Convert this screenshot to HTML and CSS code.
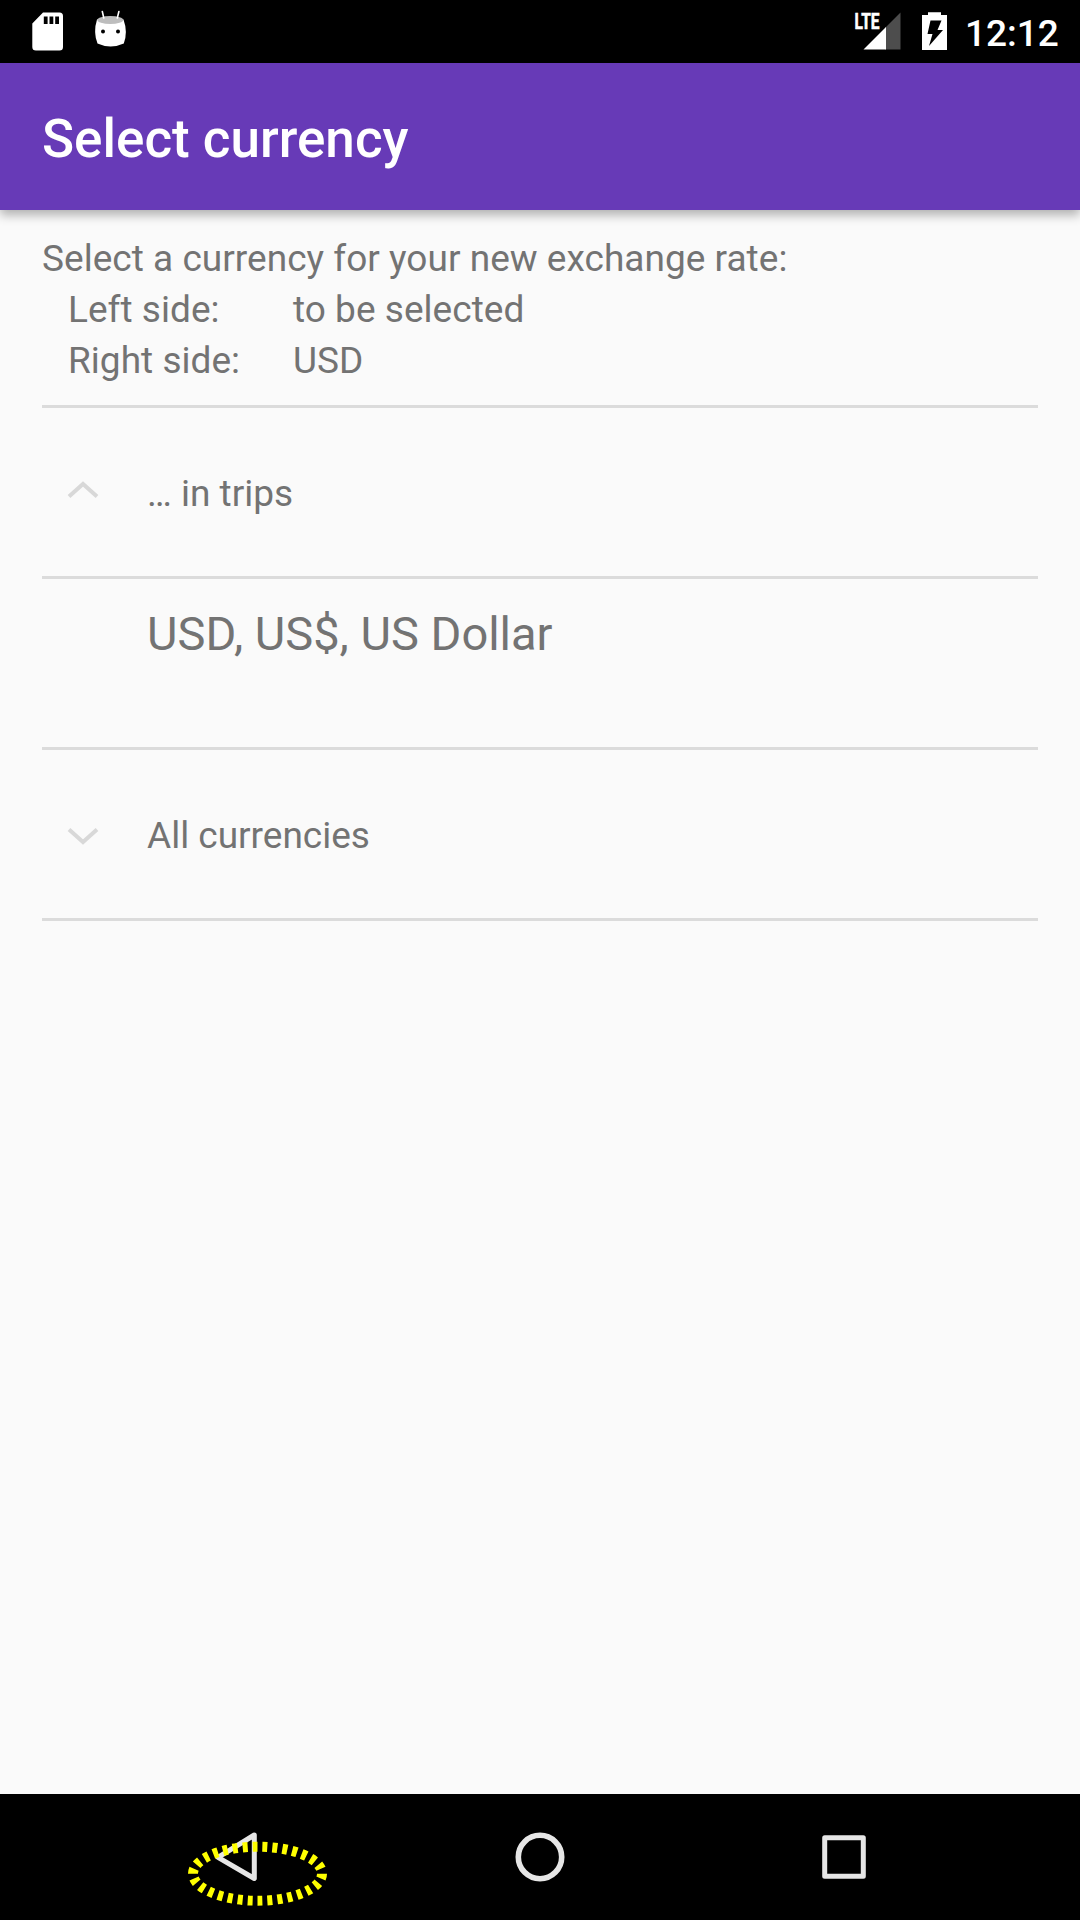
FILE: index.html
```html
<!DOCTYPE html>
<html lang="en">
<head>
<meta charset="utf-8">
<title>Select currency</title>
<link rel="stylesheet" href="styles.css">
</head>
<body>
<div class="screen">
  <header class="status-bar">
    <svg class="status-icons" width="130" height="63" viewBox="0 0 130 63" aria-hidden="true">
      <path fill="#fff" fill-rule="evenodd" d="M43 12.5H59.500Q63 12.500 63 16V47Q63 50.500 59.500 50.500H36Q32.300 50.500 32.300 47V23.500ZM43.800 16.500V24H47.600V16.500ZM49.500 16.500V24H53.300V16.500ZM55.200 16.500V24H59V16.500Z"/>
      <path fill="#fff" d="M97 19.500Q110 15.500 123.500 19.500Q128 32 123.800 43.500Q110.500 49.500 97.500 43.500Q93 32 97 19.500Z"/>
      <ellipse cx="110.300" cy="20" rx="13" ry="4" fill="#bdbdbd"/>
      <path stroke="#fff" stroke-width="1.600" stroke-linecap="round" d="M102.300 11.500L103.800 18M118.900 11.500L117.300 18"/>
      <circle cx="103" cy="31.500" r="2"/><circle cx="118" cy="31.500" r="2"/>
    </svg>
    <div class="status-right">
      <svg width="110" height="63" viewBox="850 0 110 63" aria-hidden="true">
        <text class="network" x="854.500" y="29.300" textLength="25" lengthAdjust="spacingAndGlyphs">LTE</text>
        <path fill="#4d4d4d" d="M900.500 12.500V49.500H885V28Z"/>
        <path fill="#fff" d="M886 27V49.500H863.500Z"/>
        <path fill="#fff" d="M928 12.300H941V15H947V50H922V15H928Z"/>
        <path d="M930.500 20.500H941.500L937.500 30H943L929 46L932.500 34H927.500Z"/>
      </svg>
      <span class="clock">12:12</span>
    </div>
  </header>

  <div class="app-bar"><h1 class="title">Select currency</h1></div>

  <main class="content">
    <section class="summary">
      <p class="prompt">Select a currency for your new exchange rate:</p>
      <dl class="sides">
        <dt>Left side:</dt><dd>to be selected</dd>
        <dt>Right side:</dt><dd>USD</dd>
      </dl>
    </section>
    <div class="group">
      <svg class="chevron" width="38" height="24" viewBox="0 0 38 24" aria-hidden="true"><path d="M5 16.500L19 4L33 16.500"/></svg>
      <span class="group-name">… in trips</span>
    </div>
    <div class="item">USD, US$, US Dollar</div>
    <div class="group">
      <svg class="chevron" width="38" height="24" viewBox="0 0 38 24" aria-hidden="true"><path d="M5 7.500L19 20L33 7.500"/></svg>
      <span class="group-name">All currencies</span>
    </div>
  </main>

  <nav class="nav-bar">
    <svg width="1080" height="126" viewBox="0 1794 1080 126" aria-hidden="true">
      <g fill="none" stroke="#e6e6e6" stroke-linejoin="round">
        <path stroke-width="5" d="M254.300 1835L218 1857.300L254.300 1878.500Z"/>
        <circle cx="540" cy="1857" r="21.700" stroke-width="5.600"/>
        <rect x="824.700" y="1837.700" width="38.600" height="38.600" stroke-width="5"/>
      </g>
      <ellipse class="touch-mark" cx="257.500" cy="1873.700" rx="64.500" ry="27" pathLength="300"/>
    </svg>
  </nav>
</div>
</body>
</html>
```
FILE: styles.css
```css
body {
  margin: 0;
  font-family: Roboto, "Noto Sans", sans-serif;
  font-size: 37px;
  color: #737373;
  background: #fafafa;
}
.screen {
  display: flex;
  flex-direction: column;
  width: 1080px;
  height: 1920px;
  overflow: hidden;
}
.status-bar {
  display: flex;
  justify-content: space-between;
  height: 63px;
  background: #000;
}
.status-right { display: flex; }
.clock {
  width: 99px;
  padding: 0 16px 0 5px;
  font-weight: 500;
  line-height: 68px;
  color: #fff;
}
.network {
  font-size: 21.5px;
  font-weight: 700;
  fill: #fff;
  stroke: #fff;
  stroke-width: 0.6px;
}
.app-bar {
  display: flex;
  align-items: center;
  height: 147px;
  padding-left: 42px;
  background: #673ab7;
  box-shadow: 0 5px 10px rgba(0, 0, 0, 0.3);
}
.title {
  margin: 0;
  padding-top: 5px;
  font-size: 53px;
  font-weight: 500;
  line-height: 62px;
  color: #fff;
}
.content {
  flex: 1;
  padding: 0 42px;
}
.summary {
  height: 195px;
  padding-top: 23px;
  box-sizing: border-box;
  line-height: 51px;
  letter-spacing: 0.03px;
}
.prompt { margin: 0; }
.sides {
  display: grid;
  grid-template-columns: 225px 1fr;
  margin: 0;
  padding-left: 26px;
}
.sides dd { margin: 0; }
.group,
.item {
  box-sizing: border-box;
  height: 171px;
  border-top: 3px solid #dbdbdb;
}
.group {
  display: flex;
  align-items: center;
  gap: 45px;
  padding-left: 22px;
}
.group-name { padding-top: 2px; }
.group:last-child {
  height: 174px;
  border-bottom: 3px solid #dbdbdb;
}
.chevron {
  fill: none;
  stroke: #d8d8d8;
  stroke-width: 4;
}
.item {
  padding: 24px 0 0 105px;
  font-size: 47px;
  line-height: 62px;
}
.nav-bar {
  height: 126px;
  background: #000;
}
.nav-bar svg { display: block; }
.touch-mark {
  fill: none;
  stroke: #ff0;
  stroke-width: 10;
  stroke-dasharray: 5 5;
}
```
